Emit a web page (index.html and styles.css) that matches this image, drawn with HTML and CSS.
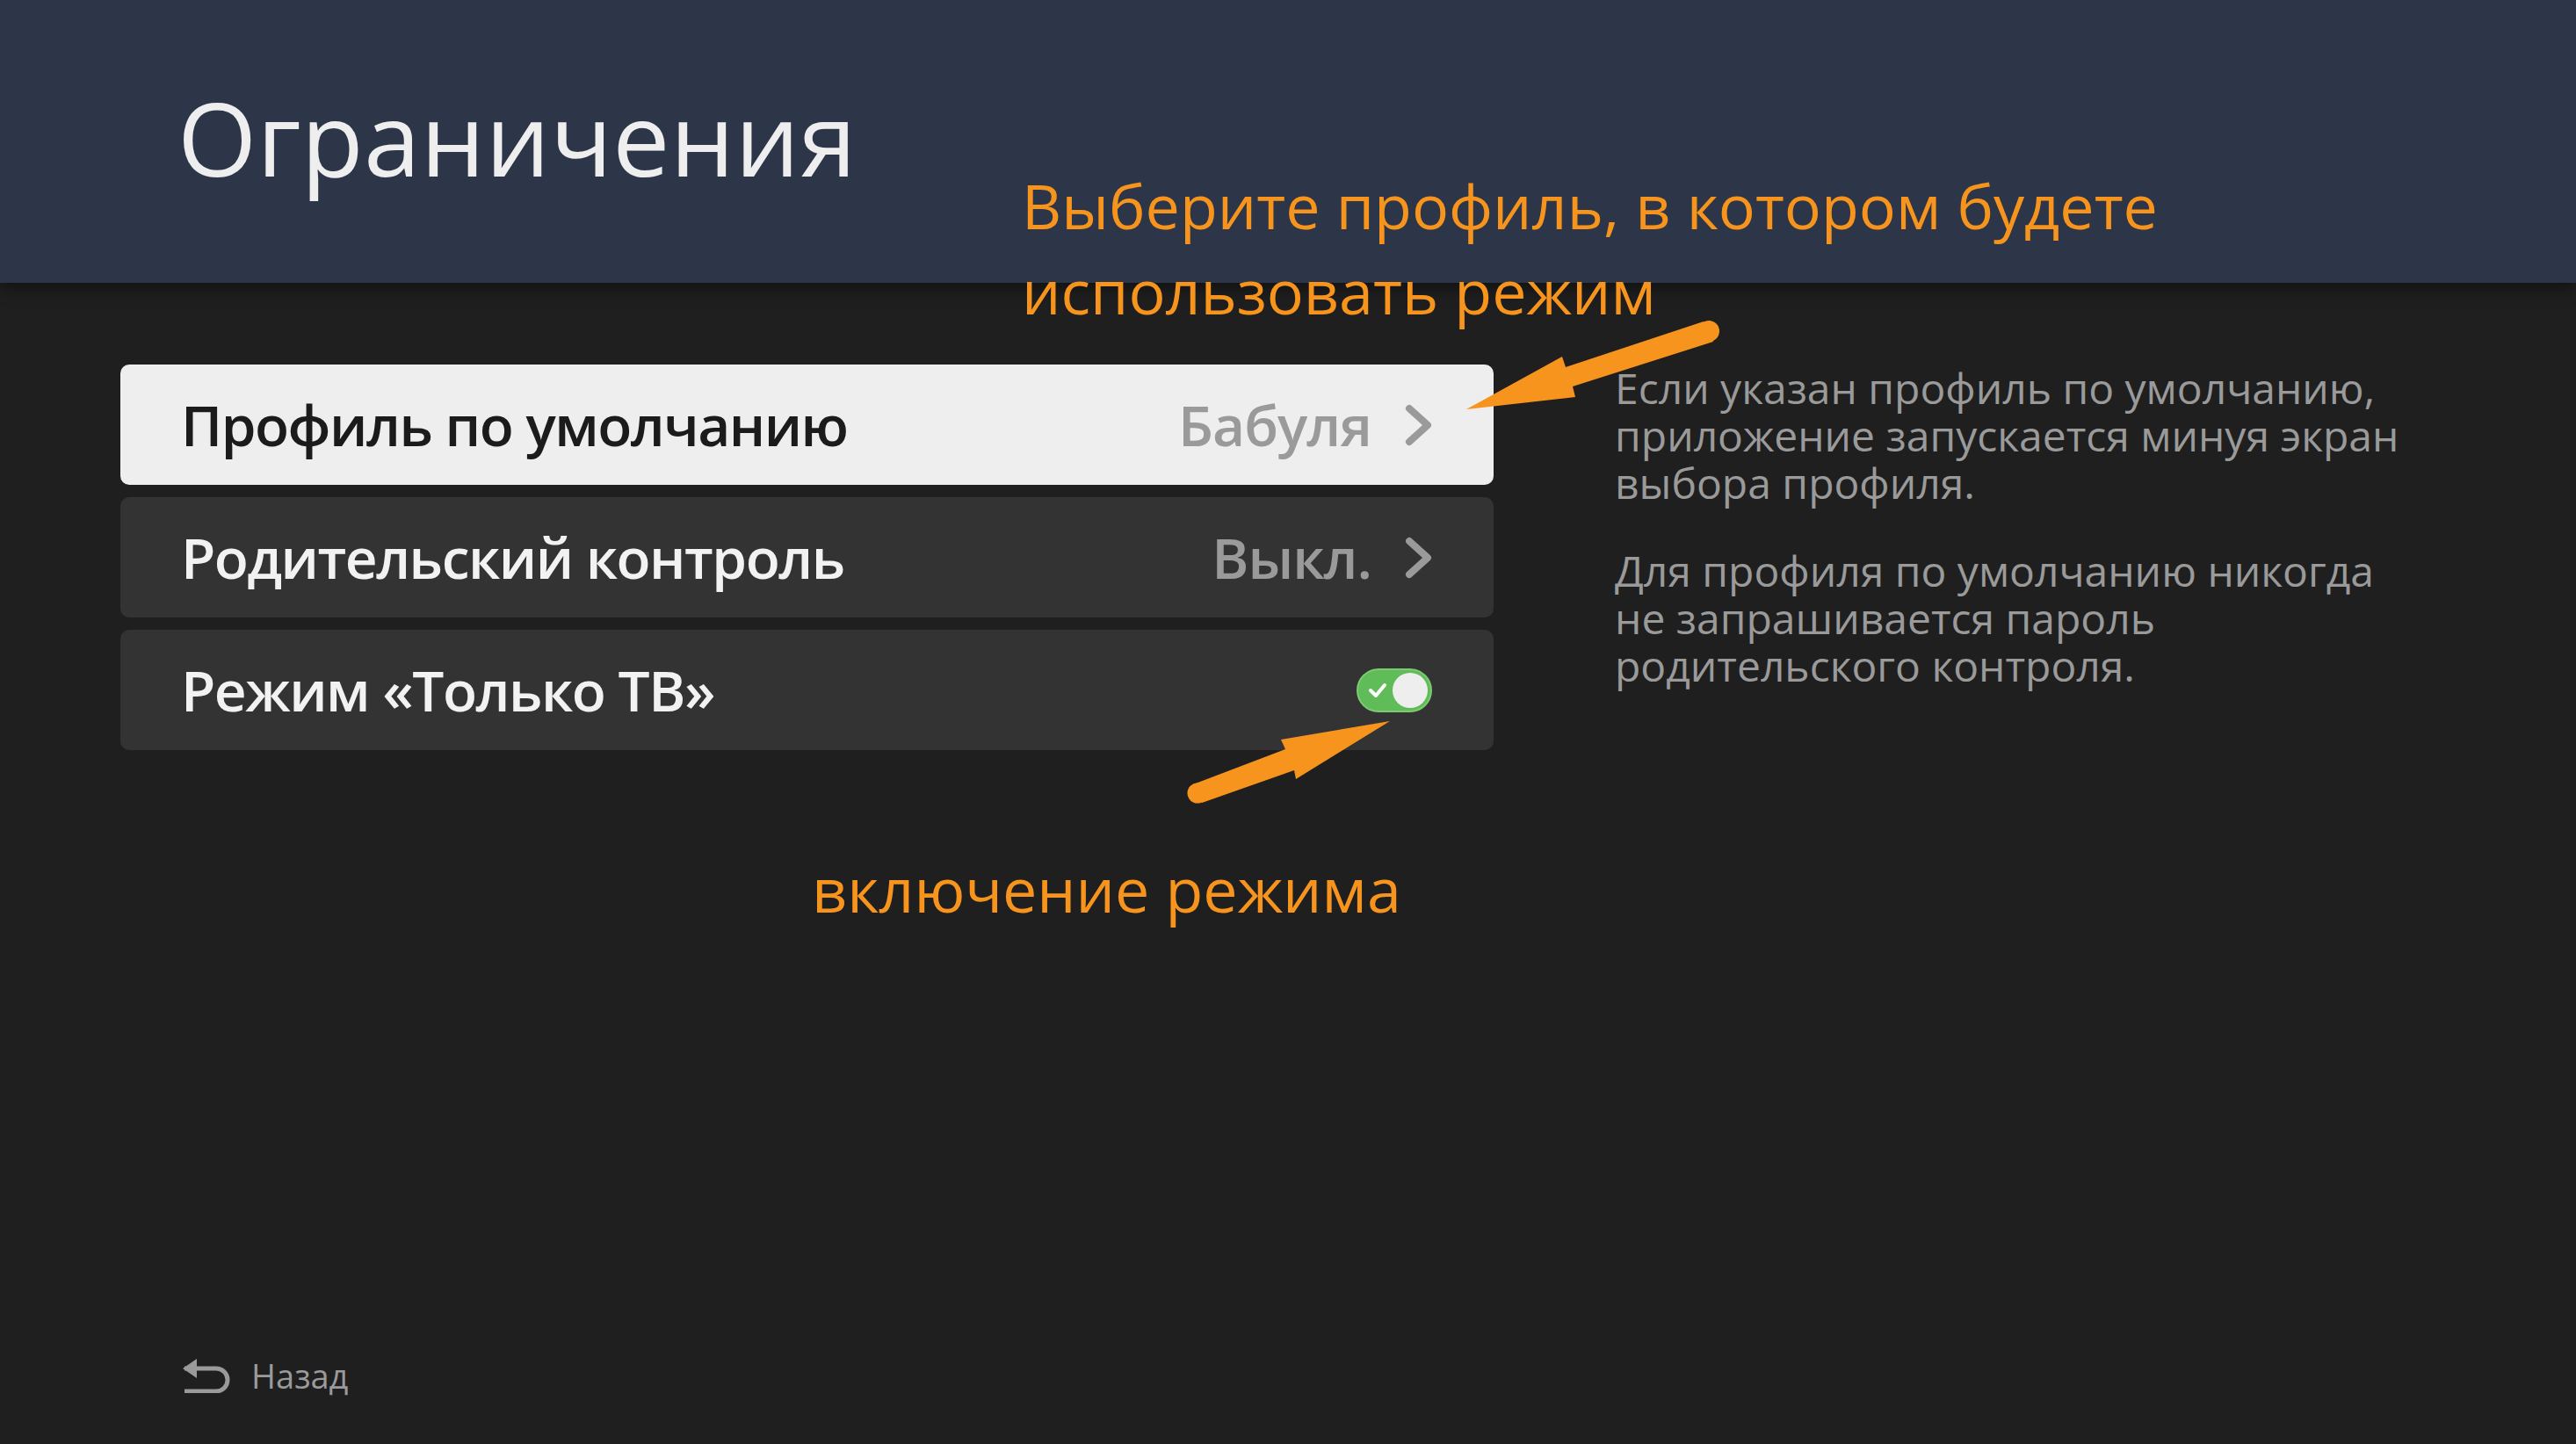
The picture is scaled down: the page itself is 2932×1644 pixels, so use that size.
FILE: index.html
```html
<!DOCTYPE html>
<html lang="ru">
<head>
    <meta charset="UTF-8">
    <title>Ограничения</title>
    <link rel="stylesheet" href="styles.css">
</head>
<body>
    <div class="screen">
        <header class="header">
            <h1 class="title">Ограничения</h1>
        </header>

        <main class="content">
            <div class="menu">
                <div class="row selected">
                    <span class="label">Профиль по умолчанию</span>
                    <span class="value">Бабуля
                        <svg class="chevron" viewBox="0 0 31 48"><polyline points="5,5 26,24 5,43"/></svg>
                    </span>
                </div>
                <div class="row">
                    <span class="label">Родительский контроль</span>
                    <span class="value">Выкл.
                        <svg class="chevron" viewBox="0 0 31 48"><polyline points="5,5 26,24 5,43"/></svg>
                    </span>
                </div>
                <div class="row">
                    <span class="label">Режим «Только ТВ»</span>
                    <span class="toggle on">
                        <svg class="check" viewBox="0 0 22 18"><polyline points="3,9 9,15 19,3"/></svg>
                        <span class="knob"></span>
                    </span>
                </div>
            </div>

            <div class="description">
                <p>Если указан профиль по умолчанию, приложение запускается минуя экран выбора профиля.</p>
                <p>Для профиля по умолчанию никогда не запрашивается пароль родительского контроля.</p>
            </div>
        </main>

        <footer class="footer">
            <svg class="back-icon" viewBox="0 0 58 40">
                <path d="M4 12 H40 A13 13 0 0 1 40 38 H4"/>
                <polygon points="2,12 18,1 18,23"/>
            </svg>
            <span>Назад</span>
        </footer>

        <!-- annotations drawn over the screenshot -->
        <div class="note note-top">Выберите профиль, в котором будете<br>использовать режим</div>
        <div class="note note-bottom">включение режима</div>
        <svg class="arrows" viewBox="0 0 2932 1644">
            <polygon points="1669,466 1778,406 1782,418 1939,366 1950,389 1790,440 1793,452"/>
            <circle cx="1945" cy="377" r="12"/>
            <polygon points="1582,821 1458,842 1463,853 1358,893 1368,914 1473,877 1475,887"/>
            <circle cx="1363" cy="903" r="11.5"/>
        </svg>
    </div>
</body>
</html>
```
FILE: styles.css
```css
* {
    margin: 0;
    padding: 0;
    box-sizing: border-box;
}

body {
    background: #1f1f1f;
    font-family: "Open Sans", "Noto Sans", sans-serif;
    color: #f0f0f0;
}

.screen {
    position: relative;
    width: 2932px;
    height: 1644px;
    overflow: hidden;
    display: flex;
    flex-direction: column;
}

.header {
    height: 322px;
    background: #2c3648;
    padding-left: 202px;
    padding-top: 76px;
    box-shadow: 0 6px 18px rgba(0, 0, 0, 0.45);
    position: relative;
    z-index: 1;
}

.title {
    font-size: 116px;
    font-weight: 400;
    line-height: 160px;
    color: #eeeeee;
    letter-spacing: 0.3px;
}

.content {
    display: flex;
    padding: 93px 0 0 137px;
    gap: 138px;
    flex: 1;
}

.menu {
    width: 1563px;
    display: flex;
    flex-direction: column;
    gap: 14px;
}

.row {
    height: 137px;
    background: #333333;
    border-radius: 10px;
    display: flex;
    align-items: center;
    justify-content: space-between;
    padding: 0 70px 0 69px;
}

.label {
    font-size: 64px;
    font-weight: 600;
    letter-spacing: -1.5px;
    color: #f2f2f2;
}

.selected {
    background: #eeeeee;
}

.selected .label {
    color: #1b1b1b;
}

.value {
    display: flex;
    align-items: center;
    gap: 38px;
    font-size: 64px;
    font-weight: 600;
    letter-spacing: -1px;
    color: #9a9a9a;
}

.chevron {
    width: 31px;
    height: 48px;
    fill: none;
    stroke: #9a9a9a;
    stroke-width: 8;
    stroke-linecap: round;
    stroke-linejoin: round;
}

.toggle {
    width: 86px;
    height: 50px;
    border-radius: 25px;
    background: #60bc58;
    border: 2px solid #7ccb6f;
    display: flex;
    align-items: center;
    justify-content: space-between;
    padding: 0 3px 0 11px;
}

.check {
    width: 22px;
    height: 18px;
    fill: none;
    stroke: #ffffff;
    stroke-width: 4;
    stroke-linecap: round;
    stroke-linejoin: round;
}

.knob {
    width: 40px;
    height: 40px;
    border-radius: 50%;
    background: #eeeeee;
}

.description {
    width: 900px;
    font-size: 48px;
    line-height: 54px;
    color: #9a9a9a;
}

.description p + p {
    margin-top: 46px;
}

.footer {
    display: flex;
    align-items: center;
    gap: 22px;
    padding: 0 0 52px 206px;
    font-size: 38px;
    color: #9a9a9a;
}

.back-icon {
    width: 58px;
    height: 40px;
}

.back-icon path {
    fill: none;
    stroke: #9a9a9a;
    stroke-width: 5;
}

.back-icon polygon {
    fill: #9a9a9a;
}

.note {
    position: absolute;
    z-index: 2;
    font-size: 70px;
    line-height: 97px;
    color: #f7941d;
}

.note-top {
    left: 1163px;
    top: 186px;
}

.note-bottom {
    left: 924px;
    top: 964px;
}

.arrows {
    position: absolute;
    z-index: 2;
    left: 0;
    top: 0;
    width: 2932px;
    height: 1644px;
    fill: #f7941d;
}
```
